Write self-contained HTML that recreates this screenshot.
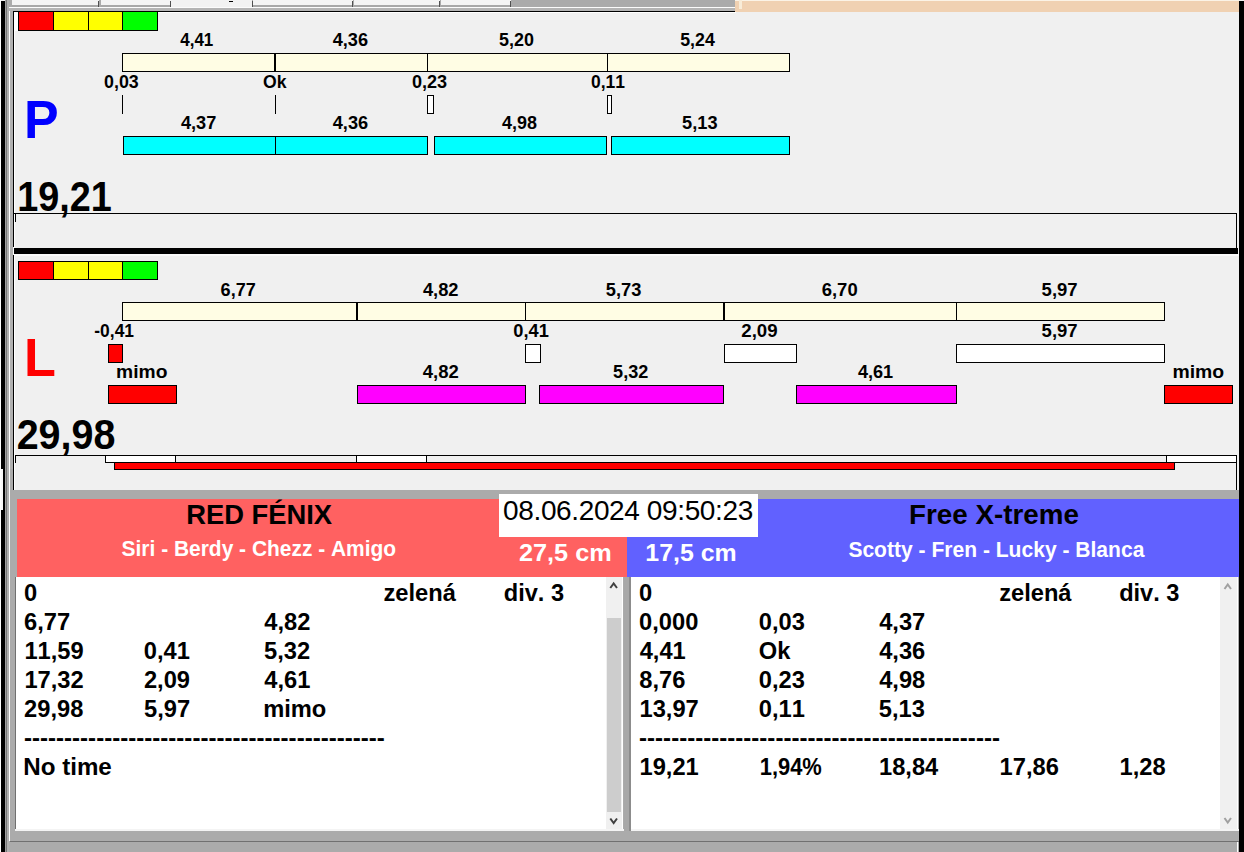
<!DOCTYPE html>
<html><head><meta charset="utf-8"><style>
html,body{margin:0;padding:0;background:#f0f0f0;overflow:hidden}
svg{display:block}
text{font-family:"Liberation Sans",sans-serif;font-kerning:none}
</style></head><body>
<svg width="1244" height="852" viewBox="0 0 1244 852" shape-rendering="crispEdges">
<rect x="0" y="0" width="1244" height="852" fill="#f0f0f0"/>
<rect x="0" y="0" width="1" height="852" fill="#ffffff"/>
<rect x="1" y="1" width="4" height="851" fill="#000"/>
<rect x="1" y="469" width="2" height="41" fill="#f8f8f8"/>
<rect x="5" y="0" width="1" height="852" fill="#a0a0a0"/>
<rect x="6" y="0" width="1" height="852" fill="#787878"/>
<rect x="7" y="0" width="2" height="852" fill="#b0b0b0"/>
<rect x="9" y="0" width="1" height="852" fill="#ffffff"/>
<rect x="10" y="11" width="3" height="479" fill="#b0b0b0"/>
<rect x="13" y="11" width="1" height="479" fill="#000"/>
<rect x="14" y="12" width="1" height="478" fill="#ffffff"/>
<rect x="1239" y="1" width="5" height="851" fill="#000"/>
<rect x="9" y="0" width="727" height="7" fill="#ababab"/>
<rect x="12" y="0" width="87" height="5" fill="#f4f4f4"/>
<rect x="12" y="5" width="87" height="2" fill="#a8a8a8"/>
<rect x="98" y="1" width="1" height="6" fill="#505050"/>
<rect x="101" y="0" width="70" height="5" fill="#f4f4f4"/>
<rect x="101" y="5" width="70" height="2" fill="#a8a8a8"/>
<rect x="170" y="1" width="1" height="6" fill="#505050"/>
<rect x="171" y="0" width="81" height="7" fill="#f2f2f2"/>
<rect x="229" y="1" width="4" height="1" fill="#000"/>
<rect x="252" y="1" width="1" height="6" fill="#505050"/>
<rect x="253" y="0" width="100" height="5" fill="#f4f4f4"/>
<rect x="253" y="5" width="100" height="2" fill="#a8a8a8"/>
<rect x="352" y="1" width="1" height="6" fill="#505050"/>
<rect x="354" y="0" width="86" height="5" fill="#f4f4f4"/>
<rect x="354" y="5" width="86" height="2" fill="#a8a8a8"/>
<rect x="439" y="1" width="1" height="6" fill="#505050"/>
<rect x="441" y="0" width="70" height="5" fill="#f4f4f4"/>
<rect x="441" y="5" width="70" height="2" fill="#a8a8a8"/>
<rect x="510" y="1" width="1" height="6" fill="#505050"/>
<rect x="9" y="7" width="727" height="1" fill="#fcfcfc"/>
<rect x="9" y="8" width="727" height="3" fill="#b4b4b4"/>
<rect x="13" y="11" width="723" height="1" fill="#000"/>
<rect x="14" y="12" width="722" height="1" fill="#ffffff"/>
<rect x="735" y="0" width="504" height="1" fill="#fbf3e6"/>
<rect x="735" y="1" width="504" height="11" fill="#f0d1b2"/>
<rect x="739" y="0" width="3" height="9" fill="#f8ecd8"/>
<rect x="18" y="11" width="140" height="20" fill="#000"/>
<rect x="19" y="12" width="34" height="18" fill="#ff0000"/>
<rect x="54" y="12" width="34" height="18" fill="#ffff00"/>
<rect x="89" y="12" width="33" height="18" fill="#ffff00"/>
<rect x="123" y="12" width="34" height="18" fill="#00ff00"/>
<rect x="14" y="12" width="4" height="19" fill="#ffffff"/>
<rect x="122" y="53" width="153" height="19" fill="#000"/>
<rect x="123" y="54" width="151" height="17" fill="#fffde4"/>
<rect x="275" y="53" width="153" height="19" fill="#000"/>
<rect x="276" y="54" width="151" height="17" fill="#fffde4"/>
<rect x="427" y="53" width="181" height="19" fill="#000"/>
<rect x="428" y="54" width="179" height="17" fill="#fffde4"/>
<rect x="607" y="53" width="183" height="19" fill="#000"/>
<rect x="608" y="54" width="181" height="17" fill="#fffde4"/>
<text x="180.24" y="46" font-size="17.6" font-weight="bold" fill="#000" textLength="33.03" lengthAdjust="spacingAndGlyphs">4,41</text>
<text x="332.73" y="46" font-size="17.6" font-weight="bold" fill="#000" textLength="35.33" lengthAdjust="spacingAndGlyphs">4,36</text>
<text x="499.05" y="46" font-size="17.6" font-weight="bold" fill="#000" textLength="34.89" lengthAdjust="spacingAndGlyphs">5,20</text>
<text x="680.25" y="46" font-size="17.6" font-weight="bold" fill="#000" textLength="34.54" lengthAdjust="spacingAndGlyphs">5,24</text>
<text x="104.10" y="87.5" font-size="17.6" font-weight="bold" fill="#000" textLength="34.65" lengthAdjust="spacingAndGlyphs">0,03</text>
<text x="262.98" y="87.5" font-size="17.6" font-weight="bold" fill="#000" textLength="23.51" lengthAdjust="spacingAndGlyphs">Ok</text>
<text x="411.99" y="87.5" font-size="17.6" font-weight="bold" fill="#000" textLength="35.17" lengthAdjust="spacingAndGlyphs">0,23</text>
<text x="591.01" y="87.5" font-size="17.6" font-weight="bold" fill="#000" textLength="33.98" lengthAdjust="spacingAndGlyphs">0,11</text>
<rect x="122" y="95" width="1" height="19" fill="#000"/>
<rect x="275" y="95" width="1" height="19" fill="#000"/>
<rect x="427" y="95" width="7" height="19" fill="#000"/>
<rect x="428" y="96" width="5" height="17" fill="#fff"/>
<rect x="607" y="95" width="5" height="19" fill="#000"/>
<rect x="608" y="96" width="3" height="17" fill="#fff"/>
<text x="180.92" y="129" font-size="17.6" font-weight="bold" fill="#000" textLength="35.37" lengthAdjust="spacingAndGlyphs">4,37</text>
<text x="332.72" y="129" font-size="17.6" font-weight="bold" fill="#000" textLength="35.43" lengthAdjust="spacingAndGlyphs">4,36</text>
<text x="502.13" y="129" font-size="17.6" font-weight="bold" fill="#000" textLength="34.92" lengthAdjust="spacingAndGlyphs">4,98</text>
<text x="682.14" y="129" font-size="17.6" font-weight="bold" fill="#000" textLength="35.42" lengthAdjust="spacingAndGlyphs">5,13</text>
<rect x="123" y="136" width="153" height="19" fill="#000"/>
<rect x="124" y="137" width="151" height="17" fill="#00ffff"/>
<rect x="275" y="136" width="153" height="19" fill="#000"/>
<rect x="276" y="137" width="151" height="17" fill="#00ffff"/>
<rect x="434" y="136" width="173" height="19" fill="#000"/>
<rect x="435" y="137" width="171" height="17" fill="#00ffff"/>
<rect x="611" y="136" width="179" height="19" fill="#000"/>
<rect x="612" y="137" width="177" height="17" fill="#00ffff"/>
<text x="24.12" y="138" font-size="53.7" font-weight="bold" fill="#0000ff" textLength="34.65" lengthAdjust="spacingAndGlyphs">P</text>
<text x="17.22" y="211" font-size="42" font-weight="bold" fill="#000" textLength="94.63" lengthAdjust="spacingAndGlyphs">19,21</text>
<rect x="14" y="213" width="1223" height="1" fill="#000"/>
<rect x="1236" y="213" width="1" height="35" fill="#000"/>
<rect x="15" y="214" width="1" height="8" fill="#000"/>
<rect x="14" y="248" width="1224" height="6" fill="#000"/>
<rect x="13" y="247" width="1" height="8" fill="#f8f8f8"/>
<rect x="14" y="254" width="1225" height="2" fill="#fafafa"/>
<rect x="18" y="261" width="140" height="19" fill="#000"/>
<rect x="19" y="262" width="34" height="17" fill="#ff0000"/>
<rect x="54" y="262" width="34" height="17" fill="#ffff00"/>
<rect x="89" y="262" width="33" height="17" fill="#ffff00"/>
<rect x="123" y="262" width="34" height="17" fill="#00ff00"/>
<rect x="122" y="302" width="235" height="19" fill="#000"/>
<rect x="123" y="303" width="233" height="17" fill="#fffde4"/>
<rect x="357" y="302" width="169" height="19" fill="#000"/>
<rect x="358" y="303" width="167" height="17" fill="#fffde4"/>
<rect x="525" y="302" width="199" height="19" fill="#000"/>
<rect x="526" y="303" width="197" height="17" fill="#fffde4"/>
<rect x="724" y="302" width="233" height="19" fill="#000"/>
<rect x="725" y="303" width="231" height="17" fill="#fffde4"/>
<rect x="956" y="302" width="209" height="19" fill="#000"/>
<rect x="957" y="303" width="207" height="17" fill="#fffde4"/>
<text x="220.64" y="295.5" font-size="17.6" font-weight="bold" fill="#000" textLength="35.16" lengthAdjust="spacingAndGlyphs">6,77</text>
<text x="422.92" y="295.5" font-size="17.6" font-weight="bold" fill="#000" textLength="35.61" lengthAdjust="spacingAndGlyphs">4,82</text>
<text x="605.84" y="295.5" font-size="17.6" font-weight="bold" fill="#000" textLength="35.52" lengthAdjust="spacingAndGlyphs">5,73</text>
<text x="821.72" y="295.5" font-size="17.6" font-weight="bold" fill="#000" textLength="35.93" lengthAdjust="spacingAndGlyphs">6,70</text>
<text x="1041.63" y="295.5" font-size="17.6" font-weight="bold" fill="#000" textLength="35.98" lengthAdjust="spacingAndGlyphs">5,97</text>
<text x="94.32" y="337" font-size="17.6" font-weight="bold" fill="#000" textLength="39.77" lengthAdjust="spacingAndGlyphs">-0,41</text>
<text x="513.38" y="337" font-size="17.6" font-weight="bold" fill="#000" textLength="35.53" lengthAdjust="spacingAndGlyphs">0,41</text>
<text x="741.25" y="337" font-size="17.6" font-weight="bold" fill="#000" textLength="36.34" lengthAdjust="spacingAndGlyphs">2,09</text>
<text x="1041.63" y="337" font-size="17.6" font-weight="bold" fill="#000" textLength="35.98" lengthAdjust="spacingAndGlyphs">5,97</text>
<rect x="108" y="344" width="15" height="19" fill="#000"/>
<rect x="109" y="345" width="13" height="17" fill="#ff0000"/>
<rect x="525" y="344" width="16" height="19" fill="#000"/>
<rect x="526" y="345" width="14" height="17" fill="#fff"/>
<rect x="724" y="344" width="73" height="19" fill="#000"/>
<rect x="725" y="345" width="71" height="17" fill="#fff"/>
<rect x="956" y="344" width="209" height="19" fill="#000"/>
<rect x="957" y="345" width="207" height="17" fill="#fff"/>
<text x="116.13" y="378" font-size="17.6" font-weight="bold" fill="#000" textLength="51.32" lengthAdjust="spacingAndGlyphs">mimo</text>
<text x="422.72" y="378" font-size="17.6" font-weight="bold" fill="#000" textLength="36.02" lengthAdjust="spacingAndGlyphs">4,82</text>
<text x="613.14" y="378" font-size="17.6" font-weight="bold" fill="#000" textLength="35.18" lengthAdjust="spacingAndGlyphs">5,32</text>
<text x="857.93" y="378" font-size="17.6" font-weight="bold" fill="#000" textLength="35.28" lengthAdjust="spacingAndGlyphs">4,61</text>
<text x="1172.42" y="378" font-size="17.6" font-weight="bold" fill="#000" textLength="51.74" lengthAdjust="spacingAndGlyphs">mimo</text>
<rect x="108" y="385" width="69" height="19" fill="#000"/>
<rect x="109" y="386" width="67" height="17" fill="#ff0000"/>
<rect x="357" y="385" width="169" height="19" fill="#000"/>
<rect x="358" y="386" width="167" height="17" fill="#ff00ff"/>
<rect x="539" y="385" width="185" height="19" fill="#000"/>
<rect x="540" y="386" width="183" height="17" fill="#ff00ff"/>
<rect x="796" y="385" width="161" height="19" fill="#000"/>
<rect x="797" y="386" width="159" height="17" fill="#ff00ff"/>
<rect x="1164" y="385" width="69" height="19" fill="#000"/>
<rect x="1165" y="386" width="67" height="17" fill="#ff0000"/>
<text x="24.01" y="376" font-size="53.7" font-weight="bold" fill="#ff0000" textLength="31.90" lengthAdjust="spacingAndGlyphs">L</text>
<text x="16.63" y="449" font-size="42.5" font-weight="bold" fill="#000" textLength="98.78" lengthAdjust="spacingAndGlyphs">29,98</text>
<rect x="15" y="455" width="1222" height="1" fill="#000"/>
<rect x="15" y="456" width="1" height="7" fill="#000"/>
<rect x="105" y="455" width="71" height="8" fill="#000"/>
<rect x="106" y="456" width="69" height="6" fill="#fff"/>
<rect x="356" y="455" width="71" height="8" fill="#000"/>
<rect x="357" y="456" width="69" height="6" fill="#fff"/>
<rect x="1166" y="455" width="71" height="8" fill="#000"/>
<rect x="1167" y="456" width="69" height="6" fill="#fff"/>
<rect x="114" y="462" width="1061" height="8" fill="#000"/>
<rect x="115" y="463" width="1059" height="6" fill="#ff0000"/>
<rect x="1236" y="455" width="1" height="35" fill="#000"/>
<rect x="10" y="490" width="1229" height="362" fill="#ababab"/>
<rect x="10" y="469" width="3" height="383" fill="#ababab"/>
<rect x="17" y="499" width="610" height="78" fill="#ff6161"/>
<rect x="627" y="499" width="612" height="78" fill="#6161ff"/>
<rect x="499" y="494" width="259" height="43" fill="#ffffff"/>
<text x="503.11" y="519.6" font-size="28" fill="#000" textLength="250.12" lengthAdjust="spacing">08.06.2024 09:50:23</text>
<text x="186.17" y="523.8" font-size="28.5" font-weight="bold" fill="#000" textLength="145.87" lengthAdjust="spacingAndGlyphs">RED FÉNIX</text>
<text x="121.60" y="556" font-size="21.2" font-weight="bold" fill="#fff" textLength="274.52" lengthAdjust="spacingAndGlyphs">Siri - Berdy - Chezz - Amigo</text>
<text x="518.92" y="560.5" font-size="23.2" font-weight="bold" fill="#fff" textLength="92.85" lengthAdjust="spacingAndGlyphs">27,5 cm</text>
<text x="645.33" y="560.5" font-size="23.2" font-weight="bold" fill="#fff" textLength="91.31" lengthAdjust="spacingAndGlyphs">17,5 cm</text>
<text x="909.04" y="524" font-size="28" font-weight="bold" fill="#000" textLength="169.81" lengthAdjust="spacingAndGlyphs">Free X-treme</text>
<text x="848.39" y="556.6" font-size="21.2" font-weight="bold" fill="#fff" textLength="295.97" lengthAdjust="spacingAndGlyphs">Scotty - Fren - Lucky - Blanca</text>
<rect x="15" y="577" width="608" height="252" fill="#707070"/>
<rect x="16" y="577" width="607" height="252" fill="#ffffff"/>
<rect x="15" y="829" width="609" height="2" fill="#f4f4f4"/>
<rect x="606" y="577" width="16" height="252" fill="#f0f0f0"/>
<rect x="607" y="618" width="14" height="194" fill="#cdcdcd"/>
<rect x="630" y="577" width="608" height="252" fill="#707070"/>
<rect x="631" y="577" width="607" height="252" fill="#ffffff"/>
<rect x="630" y="829" width="609" height="2" fill="#f4f4f4"/>
<rect x="1220" y="577" width="17" height="252" fill="#f0f0f0"/>
<rect x="624" y="577" width="7" height="254" fill="#a8a8a8"/>
<rect x="629" y="577" width="2" height="254" fill="#8c8c8c"/>
<rect x="10" y="841" width="1229" height="1" fill="#707070"/>
<rect x="10" y="842" width="1229" height="10" fill="#ababab"/>
<rect x="9" y="841" width="1" height="11" fill="#ababab"/>
<rect x="1237" y="842" width="1" height="10" fill="#ffffff"/>
<polyline points="610.3,588 613.65,583.5 617,588" fill="none" stroke="#404040" stroke-width="2" shape-rendering="geometricPrecision"/>
<polyline points="610.3,818.5 613.65,823 617,818.5" fill="none" stroke="#404040" stroke-width="2" shape-rendering="geometricPrecision"/>
<polyline points="1224.5,589 1227.75,584.5 1231,589" fill="none" stroke="#a0a0a0" stroke-width="2" shape-rendering="geometricPrecision"/>
<polyline points="1224.5,818 1227.75,822.5 1231,818" fill="none" stroke="#a0a0a0" stroke-width="2" shape-rendering="geometricPrecision"/>
<text x="23.96" y="600.8" font-size="23.7" font-weight="bold" fill="#000">0</text>
<text x="383.45" y="600.8" font-size="23.7" font-weight="bold" fill="#000" textLength="72.39" lengthAdjust="spacingAndGlyphs">zelená</text>
<text x="503.73" y="600.8" font-size="23.7" font-weight="bold" fill="#000" textLength="60.32" lengthAdjust="spacingAndGlyphs">div. 3</text>
<text x="24.03" y="629.8" font-size="23.7" font-weight="bold" fill="#000">6,77</text>
<text x="264.34" y="629.8" font-size="23.7" font-weight="bold" fill="#000">4,82</text>
<text x="24.41" y="658.8" font-size="23.7" font-weight="bold" fill="#000">11,59</text>
<text x="143.76" y="658.8" font-size="23.7" font-weight="bold" fill="#000">0,41</text>
<text x="263.97" y="658.8" font-size="23.7" font-weight="bold" fill="#000">5,32</text>
<text x="24.41" y="687.8" font-size="23.7" font-weight="bold" fill="#000">17,32</text>
<text x="143.88" y="687.8" font-size="23.7" font-weight="bold" fill="#000">2,09</text>
<text x="264.34" y="687.8" font-size="23.7" font-weight="bold" fill="#000">4,61</text>
<text x="24.08" y="716.8" font-size="23.7" font-weight="bold" fill="#000">29,98</text>
<text x="143.97" y="716.8" font-size="23.7" font-weight="bold" fill="#000">5,97</text>
<text x="263.14" y="716.8" font-size="23.7" font-weight="bold" fill="#000">mimo</text>
<text x="23.96" y="745.8" font-size="23.7" font-weight="bold" fill="#000" textLength="360.91" lengthAdjust="spacingAndGlyphs">---------------------------------------------</text>
<text x="23.28" y="774.8" font-size="23.7" font-weight="bold" fill="#000" textLength="88.54" lengthAdjust="spacingAndGlyphs">No time</text>
<text x="639.06" y="600.8" font-size="23.7" font-weight="bold" fill="#000">0</text>
<text x="999.15" y="600.8" font-size="23.7" font-weight="bold" fill="#000" textLength="72.39" lengthAdjust="spacingAndGlyphs">zelená</text>
<text x="1119.13" y="600.8" font-size="23.7" font-weight="bold" fill="#000" textLength="60.32" lengthAdjust="spacingAndGlyphs">div. 3</text>
<text x="639.06" y="629.8" font-size="23.7" font-weight="bold" fill="#000">0,000</text>
<text x="758.76" y="629.8" font-size="23.7" font-weight="bold" fill="#000">0,03</text>
<text x="879.14" y="629.8" font-size="23.7" font-weight="bold" fill="#000">4,37</text>
<text x="639.64" y="658.8" font-size="23.7" font-weight="bold" fill="#000">4,41</text>
<text x="758.73" y="658.8" font-size="23.7" font-weight="bold" fill="#000">Ok</text>
<text x="879.14" y="658.8" font-size="23.7" font-weight="bold" fill="#000">4,36</text>
<text x="639.25" y="687.8" font-size="23.7" font-weight="bold" fill="#000">8,76</text>
<text x="758.76" y="687.8" font-size="23.7" font-weight="bold" fill="#000">0,23</text>
<text x="879.14" y="687.8" font-size="23.7" font-weight="bold" fill="#000">4,98</text>
<text x="639.51" y="716.8" font-size="23.7" font-weight="bold" fill="#000">13,97</text>
<text x="758.76" y="716.8" font-size="23.7" font-weight="bold" fill="#000">0,11</text>
<text x="878.77" y="716.8" font-size="23.7" font-weight="bold" fill="#000">5,13</text>
<text x="639.06" y="745.8" font-size="23.7" font-weight="bold" fill="#000" textLength="360.91" lengthAdjust="spacingAndGlyphs">---------------------------------------------</text>
<text x="639.51" y="774.8" font-size="23.7" font-weight="bold" fill="#000">19,21</text>
<text x="759.72" y="774.8" font-size="23.7" font-weight="bold" fill="#000" textLength="62.06" lengthAdjust="spacingAndGlyphs">1,94%</text>
<text x="879.01" y="774.8" font-size="23.7" font-weight="bold" fill="#000">18,84</text>
<text x="999.61" y="774.8" font-size="23.7" font-weight="bold" fill="#000">17,86</text>
<text x="1119.61" y="774.8" font-size="23.7" font-weight="bold" fill="#000">1,28</text>
</svg>
</body></html>
